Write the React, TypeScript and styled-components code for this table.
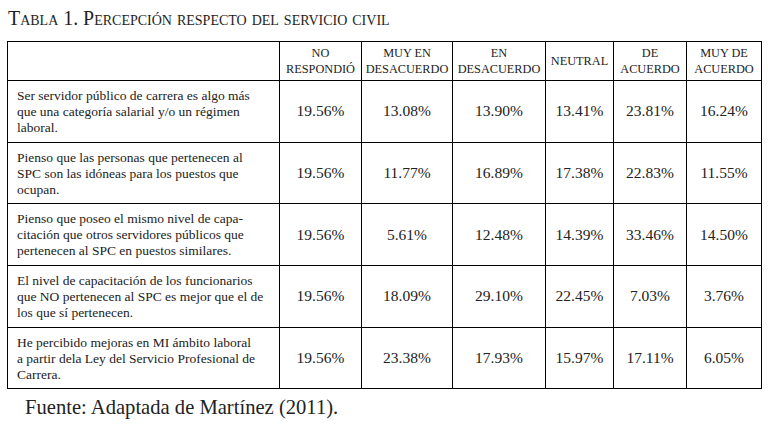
import React from "react";
import styled, { createGlobalStyle } from "styled-components";

const serif = `"Liberation Serif", "Times New Roman", serif`;

const Global = createGlobalStyle`
  html, body { margin: 0; padding: 0; background: #fff; }
  body { font-family: ${serif}; color: #222; }
`;

const Page = styled.div`
  width: 768px;
  height: 425px;
  padding: 7px 7px 0 7px;
  box-sizing: border-box;
  display: flex;
  flex-direction: column;
  font-family: ${serif};
`;

const Title = styled.h1`
  margin: 0 0 12px 1px;
  font-family: ${serif};
  font-size: 19.9px;
  line-height: 22px;
  font-weight: normal;
  font-variant: small-caps;
  color: #1e1e1e;
`;

const Table = styled.table`
  width: 754px;
  border-collapse: collapse;
  table-layout: fixed;
  border: 1.5px solid #000;
  font-family: ${serif};
`;

const HeadCell = styled.th`
  border: 1.5px solid #000;
  font-family: ${serif};
  font-weight: normal;
  font-size: 12.3px;
  line-height: 16px;
  text-transform: uppercase;
  text-align: center;
  vertical-align: middle;
  color: #222;
  padding: 0 2px;
`;

const HeadRow = styled.tr`
  height: 39px;
`;

const BodyRow = styled.tr`
  height: 61.7px;
`;

const LabelCell = styled.td`
  border: 1.5px solid #000;
  font-family: ${serif};
  font-size: 13.5px;
  line-height: 16px;
  padding: 1px 4px 0 9px;
  vertical-align: middle;
  white-space: nowrap;
  color: #222;
`;

const NumCell = styled.td`
  border: 1.5px solid #000;
  font-family: ${serif};
  font-size: 15.5px;
  text-align: center;
  vertical-align: middle;
  color: #222;
`;

const Source = styled.p`
  margin: 7px 0 0 18px;
  font-family: ${serif};
  font-size: 20.6px;
  line-height: 23px;
  color: #222;
`;

const widths = [272, 82, 91, 93, 68, 73, 75];

const headers: string[][] = [
  ["No", "Respondió"],
  ["Muy en", "Desacuerdo"],
  ["En", "Desacuerdo"],
  ["Neutral"],
  ["De", "Acuerdo"],
  ["Muy de", "Acuerdo"],
];

const rows: { label: string[]; values: string[] }[] = [
  {
    label: [
      "Ser servidor público de carrera es algo más",
      "que una categoría salarial y/o un régimen",
      "laboral.",
    ],
    values: ["19.56%", "13.08%", "13.90%", "13.41%", "23.81%", "16.24%"],
  },
  {
    label: [
      "Pienso que las personas que pertenecen al",
      "SPC son las idóneas para los puestos que",
      "ocupan.",
    ],
    values: ["19.56%", "11.77%", "16.89%", "17.38%", "22.83%", "11.55%"],
  },
  {
    label: [
      "Pienso que poseo el mismo nivel de capa-",
      "citación que otros servidores públicos que",
      "pertenecen al SPC en puestos similares.",
    ],
    values: ["19.56%", "5.61%", "12.48%", "14.39%", "33.46%", "14.50%"],
  },
  {
    label: [
      "El nivel de capacitación de los funcionarios",
      "que NO pertenecen al SPC es mejor que el de",
      "los que sí pertenecen.",
    ],
    values: ["19.56%", "18.09%", "29.10%", "22.45%", "7.03%", "3.76%"],
  },
  {
    label: [
      "He percibido mejoras en MI ámbito laboral",
      "a partir dela Ley del Servicio Profesional de",
      "Carrera.",
    ],
    values: ["19.56%", "23.38%", "17.93%", "15.97%", "17.11%", "6.05%"],
  },
];

export default function App() {
  return (
    <>
      <Global />
      <Page>
        <Title>Tabla 1. Percepción respecto del servicio civil</Title>
        <Table>
          <colgroup>
            {widths.map((w, i) => (
              <col key={i} style={{ width: w }} />
            ))}
          </colgroup>
          <thead>
            <HeadRow>
              <HeadCell />
              {headers.map((h, i) => (
                <HeadCell key={i}>
                  {h.map((line, j) => (
                    <React.Fragment key={j}>
                      {j > 0 && <br />}
                      {line}
                    </React.Fragment>
                  ))}
                </HeadCell>
              ))}
            </HeadRow>
          </thead>
          <tbody>
            {rows.map((r, i) => (
              <BodyRow key={i}>
                <LabelCell>
                  {r.label.map((line, j) => (
                    <React.Fragment key={j}>
                      {j > 0 && <br />}
                      {line}
                    </React.Fragment>
                  ))}
                </LabelCell>
                {r.values.map((v, j) => (
                  <NumCell key={j}>{v}</NumCell>
                ))}
              </BodyRow>
            ))}
          </tbody>
        </Table>
        <Source>Fuente: Adaptada de Martínez (2011).</Source>
      </Page>
    </>
  );
}
